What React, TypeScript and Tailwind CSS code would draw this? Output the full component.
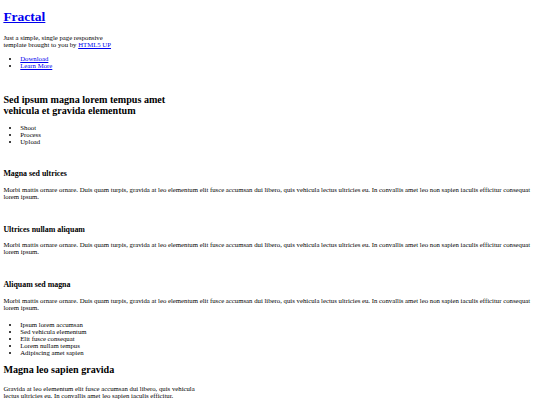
const body =
  'Morbi mattis ornare ornare. Duis quam turpis, gravida at leo elementum elit fusce accumsan dui libero, quis vehicula lectus ultricies eu. In convallis amet leo non sapien iaculis efficitur consequat lorem ipsum.';

const spotlights = ['Magna sed ultrices', 'Ultrices nullam aliquam', 'Aliquam sed magna'];

const labels = [
  'Ipsum lorem accumsan',
  'Sed vehicula elementum',
  'Elit fusce consequat',
  'Lorem nullam tempus',
  'Adipiscing amet sapien',
];

function Link({ children }: { children: React.ReactNode }) {
  return (
    <a href="#" className="text-[#0000ee] underline">
      {children}
    </a>
  );
}

export default function App() {
  return (
    <div className="min-h-[405px] bg-white px-[3.375px] text-[6.75px] leading-[normal] text-black font-['Liberation_Serif','Times_New_Roman',serif]">
      {/* header */}
      <header>
        <h1 className="my-[9.045px] text-[13.5px] font-bold">
          <Link>Fractal</Link>
        </h1>
        <p className="my-[6.75px]">
          Just a simple, single page responsive
          <br />
          template brought to you by <Link>HTML5 UP</Link>
        </p>
        <ul className="my-[6.75px] list-disc pl-[16.875px]">
          <li>
            <Link>Download</Link>
          </li>
          <li>
            <Link>Learn More</Link>
          </li>
        </ul>
        {/* broken phone image leaves an empty line */}
        <div className="h-[9.8px]" />
      </header>

      {/* one */}
      <section>
        <h2 className="my-[8.4px] text-[10.125px] font-bold">
          Sed ipsum magna lorem tempus amet
          <br />
          vehicula et gravida elementum
        </h2>
        <ul className="my-[6.75px] list-disc pl-[16.875px]">
          <li>Shoot</li>
          <li>Process</li>
          <li>Upload</li>
        </ul>
      </section>

      {/* two */}
      <section>
        {spotlights.map((title) => (
          <section key={title}>
            <div className="h-[9.6px]" />
            <h3 className="my-[7.9px] text-[7.9px] font-bold">{title}</h3>
            <p className="my-[6.75px]">{body}</p>
          </section>
        ))}
        <ul className="mt-[10.4px] mb-[6.75px] list-disc pl-[16.875px]">
          {labels.map((l) => (
            <li key={l}>{l}</li>
          ))}
        </ul>
      </section>

      {/* three */}
      <section>
        <h2 className="mt-[8.4px] mb-[10px] text-[10.125px] font-bold">Magna leo sapien gravida</h2>
        <p className="my-[6.75px]">
          Gravida at leo elementum elit fusce accumsan dui libero, quis vehicula
          <br />
          lectus ultricies eu. In convallis amet leo sapien iaculis efficitur.
        </p>
      </section>
    </div>
  );
}
